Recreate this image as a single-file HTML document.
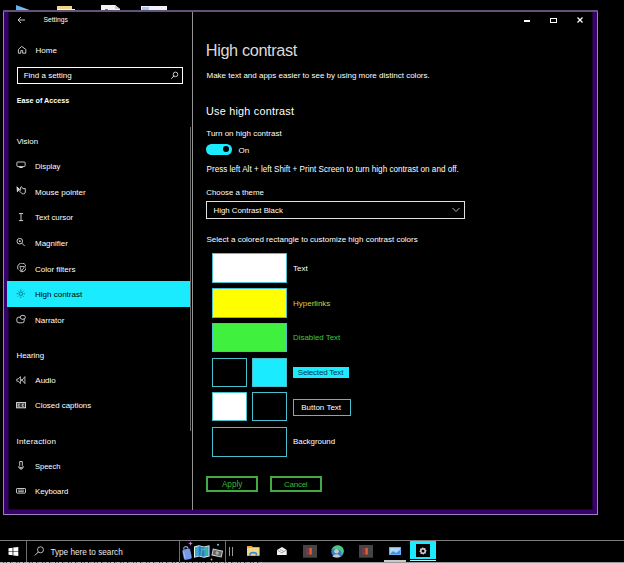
<!DOCTYPE html>
<html><head><meta charset="utf-8"><style>
html,body{margin:0;padding:0;width:624px;height:563px;overflow:hidden;background:#000;}
body{position:relative;font-family:"Liberation Sans", sans-serif;}
.t{position:absolute;white-space:nowrap;line-height:0;}
</style></head><body>
<svg style="position:absolute;left:0;top:0" width="200" height="12"><defs><linearGradient id="tg" x1="0" x2="1"><stop offset="0" stop-color="#5ab0ea"/><stop offset="0.6" stop-color="#7cc4f0"/><stop offset="1" stop-color="#e8f0f8"/></linearGradient></defs><polygon points="16,5 32,11 16,11" fill="url(#tg)"/><rect x="57" y="6" width="15" height="4" fill="#ecd488"/><rect x="57" y="9" width="18" height="2" fill="#f6f4ea"/><polygon points="101,5 115,5 120,9 120,11 101,11" fill="#f4f4f4"/><polygon points="115,5 120,9 115,9" fill="#c8c8c8"/><rect x="105" y="9" width="3" height="2" fill="#4a7ad0"/><rect x="141" y="6" width="26" height="5" fill="#eef2f8"/><rect x="142" y="7" width="7" height="3" fill="#a8c8ec"/></svg>
<div style="position:absolute;left:3px;top:10px;width:595px;height:505px;background:#9c82b8"></div>
<div style="position:absolute;left:3px;top:10px;width:595px;height:2px;background:#64527a"></div>
<div style="position:absolute;left:4px;top:12px;width:593px;height:502px;background:#37036b"></div>
<div style="position:absolute;left:8px;top:12px;width:585px;height:498px;background:#1c0236"></div>
<div style="position:absolute;left:9px;top:12px;width:583px;height:497px;background:#000"></div>
<div class="t" style="left:43.4px;top:20.46px;font-size:6.75px;color:#fff;font-weight:normal;">Settings</div>
<svg style="position:absolute;left:17px;top:16px" width="9" height="8" viewBox="0 0 9 8"><path d="M1 4H8M4 1L1 4L4 7" stroke="#ddd" stroke-width="0.9" fill="none"/></svg>
<div style="position:absolute;left:524px;top:20px;width:6px;height:2px;background:#fff"></div>
<div style="position:absolute;left:550px;top:17.5px;width:7px;height:5px;border:1.3px solid #fff;box-sizing:border-box"></div>
<svg style="position:absolute;left:577px;top:17px" width="6" height="6" viewBox="0 0 6 6"><path d="M0.5 0.5L5.5 5.5M5.5 0.5L0.5 5.5" stroke="#fff" stroke-width="1.2"/></svg>
<div style="position:absolute;left:192px;top:12px;width:1px;height:498px;background:#939393"></div>
<div style="position:absolute;left:190px;top:127px;width:1px;height:304px;background:#6c6c6c"></div>
<svg style="position:absolute;left:17px;top:45px" width="10" height="10" viewBox="0 0 10 10"><path d="M1.4 8.2V4.4L4.7 1.4L8.8 4.4V8.2H5.7V5.6H3.8V8.2Z" stroke="#ddd" stroke-width="0.9" fill="none" stroke-linejoin="round"/></svg>
<div class="t" style="left:35.5px;top:50.93px;font-size:8px;color:#fff;font-weight:normal;">Home</div>
<div style="position:absolute;left:17px;top:67px;width:166px;height:17px;border:1.5px solid #fff;box-sizing:border-box"></div>
<div class="t" style="left:23.7px;top:75.63px;font-size:8px;color:#fff;font-weight:normal;">Find a setting</div>
<svg style="position:absolute;left:171px;top:70px" width="9" height="10" viewBox="0 0 9 10"><circle cx="4.5" cy="4.4" r="2.3" stroke="#ddd" stroke-width="0.9" fill="none"/><path d="M2.9 6L0.6 8.4" stroke="#ddd" stroke-width="1" stroke-linecap="round"/></svg>
<div class="t" style="left:16.8px;top:101.01px;font-size:7.2px;color:#fff;font-weight:bold;">Ease of Access</div>
<div class="t" style="left:16.7px;top:141.86px;font-size:7.9px;color:#fff;font-weight:normal;">Vision</div>
<div style="position:absolute;left:7px;top:281px;width:183px;height:26px;background:#1aebff"></div>
<div class="t" style="left:35px;top:167.01px;font-size:7.75px;color:#fff;font-weight:normal;">Display</div>
<svg style="position:absolute;left:16px;top:161px" width="10" height="10" viewBox="0 0 10 10"><rect x="0.9" y="1" width="8.2" height="4.6" rx="0.8" stroke="#ddd" stroke-width="0.9" fill="none"/><path d="M3.3 6.4H6.7" stroke="#ddd" stroke-width="1.2"/></svg>
<div class="t" style="left:35px;top:192.73px;font-size:8px;color:#fff;font-weight:normal;">Mouse pointer</div>
<svg style="position:absolute;left:16px;top:185px" width="10" height="10" viewBox="0 0 10 10"><path d="M1 1.8L3.8 4.6L2.6 5.2L1.4 6.8Z" stroke="#ddd" stroke-width="0.9" fill="#ddd" stroke-linejoin="round"/><path d="M4.6 4.8V2.2Q5.2 1 6 2.2L6.8 3.6H9.3V7Q9.2 8.8 7.6 8.8H6.2L3.8 6.4Q3.6 5.4 4.6 5.6" stroke="#ddd" stroke-width="0.9" fill="none" stroke-linejoin="round"/></svg>
<div class="t" style="left:35px;top:218.20px;font-size:7.8px;color:#fff;font-weight:normal;">Text cursor</div>
<svg style="position:absolute;left:18px;top:213px" width="10" height="10" viewBox="0 0 10 10"><path d="M0.9 0.6H5.1M3 0.6V7.6M0.9 7.6H5.1" stroke="#ddd" stroke-width="0.9" fill="none"/></svg>
<div class="t" style="left:35px;top:243.93px;font-size:8px;color:#fff;font-weight:normal;">Magnifier</div>
<svg style="position:absolute;left:16px;top:238px" width="10" height="10" viewBox="0 0 10 10"><circle cx="3.8" cy="3.2" r="2.8" stroke="#ddd" stroke-width="0.9" fill="none"/><circle cx="3.8" cy="3.2" r="0.9" fill="#ddd"/><path d="M5.8 5.2L8.8 8.2" stroke="#ddd" stroke-width="0.9"/></svg>
<div class="t" style="left:35px;top:269.63px;font-size:8px;color:#fff;font-weight:normal;">Color filters</div>
<svg style="position:absolute;left:16px;top:263px" width="10" height="10" viewBox="0 0 10 10"><path d="M2.2 6.6A4.3 4.3 0 1 1 5.6 8.7C4.6 8.7 4 8 3.8 7" stroke="#ddd" stroke-width="0.9" fill="none"/><path d="M5.4 8.4L3.9 3.4L8.6 3.6Z" stroke="#ddd" stroke-width="0.8" fill="none"/></svg>
<div class="t" style="left:35px;top:295.43px;font-size:8px;color:#000;font-weight:normal;">High contrast</div>
<svg style="position:absolute;left:16px;top:289px" width="10" height="10" viewBox="0 0 10 10"><circle cx="4.8" cy="4.7" r="1.7" stroke="#005a66" stroke-width="0.8" fill="none"/><path d="M4.8 0.6V1.9M4.8 7.5V8.8M0.7 4.7H2M7.6 4.7H8.9M1.9 1.8L2.7 2.6M6.9 6.8L7.7 7.6M7.7 1.8L6.9 2.6M2.7 6.8L1.9 7.6" stroke="#005a66" stroke-width="0.8"/></svg>
<div class="t" style="left:35px;top:320.93px;font-size:8px;color:#fff;font-weight:normal;">Narrator</div>
<svg style="position:absolute;left:16px;top:314px" width="10" height="10" viewBox="0 0 10 10"><rect x="0.8" y="3.2" width="7.4" height="5.6" rx="2" stroke="#ddd" stroke-width="0.9" fill="none"/><ellipse cx="6.8" cy="3.3" rx="2.6" ry="2" stroke="#ddd" stroke-width="0.9" fill="#000"/></svg>
<div class="t" style="left:16.5px;top:355.96px;font-size:7.9px;color:#fff;font-weight:normal;">Hearing</div>
<div class="t" style="left:35.3px;top:380.93px;font-size:8px;color:#fff;font-weight:normal;">Audio</div>
<svg style="position:absolute;left:16px;top:376px" width="10" height="10" viewBox="0 0 10 10"><path d="M0.8 3H2.2L4.4 0.6V7.6L2.2 5.2H0.8Z" stroke="#ddd" stroke-width="0.8" fill="none"/><path d="M6 3L5.2 4.1L6 5.2M8.9 0.6V7.6L6.2 4.1Z" stroke="#ddd" stroke-width="0.8" fill="none"/></svg>
<div class="t" style="left:35px;top:406.46px;font-size:7.9px;color:#fff;font-weight:normal;">Closed captions</div>
<svg style="position:absolute;left:16px;top:402px" width="10" height="10" viewBox="0 0 10 10"><rect x="0.6" y="0.6" width="9" height="5.2" stroke="#ddd" stroke-width="1" fill="#333"/><path d="M4 2.2H2.2V4.2H4M8 2.2H6.2V4.2H8" stroke="#ddd" stroke-width="0.8" fill="none"/></svg>
<div class="t" style="left:16.5px;top:441.73px;font-size:8px;color:#fff;font-weight:normal;letter-spacing:0.2px">Interaction</div>
<div class="t" style="left:35px;top:466.70px;font-size:7.5px;color:#fff;font-weight:normal;">Speech</div>
<svg style="position:absolute;left:18px;top:461px" width="10" height="10" viewBox="0 0 10 10"><path d="M1.7 0.5H4.3V4.6L5.6 6.2L3 8.4L0.4 6.2L1.7 4.6Z" stroke="#ddd" stroke-width="0.9" fill="none"/><path d="M1.4 6.2H4.6V7.4H1.4Z" fill="#ddd"/></svg>
<div class="t" style="left:35px;top:492.30px;font-size:7.8px;color:#fff;font-weight:normal;">Keyboard</div>
<svg style="position:absolute;left:16px;top:488px" width="10" height="10" viewBox="0 0 10 10"><rect x="0.5" y="0.5" width="9" height="4.6" rx="0.6" stroke="#ddd" stroke-width="0.9" fill="none"/><path d="M2 2.1H8M2.2 3.6H7.8" stroke="#ddd" stroke-width="0.8"/></svg>
<div class="t" style="left:205.8px;top:49.55px;font-size:16.3px;color:#dadada;font-weight:normal;letter-spacing:-0.37px">High contrast</div>
<div class="t" style="left:206.5px;top:76.23px;font-size:8px;color:#fff;font-weight:normal;">Make text and apps easier to see by using more distinct colors.</div>
<div class="t" style="left:206px;top:111.36px;font-size:10.8px;color:#fff;font-weight:normal;letter-spacing:0.25px">Use high contrast</div>
<div class="t" style="left:206.3px;top:134.43px;font-size:8px;color:#fff;font-weight:normal;">Turn on high contrast</div>
<div style="position:absolute;left:206px;top:144.2px;width:25.8px;height:10.8px;background:#1aebff;border-radius:5.4px"></div>
<div style="position:absolute;left:223.3px;top:146.4px;width:5.8px;height:5.8px;background:#000;border-radius:50%"></div>
<div class="t" style="left:238.5px;top:150.53px;font-size:8px;color:#fff;font-weight:normal;">On</div>
<div class="t" style="left:206.5px;top:169.88px;font-size:8.15px;color:#fff;font-weight:normal;">Press left Alt + left Shift + Print Screen to turn high contrast on and off.</div>
<div class="t" style="left:206.3px;top:192.98px;font-size:7.85px;color:#fff;font-weight:normal;">Choose a theme</div>
<div style="position:absolute;left:206px;top:201px;width:259px;height:18px;border:1.5px solid #e0e0e0;box-sizing:border-box"></div>
<div class="t" style="left:213.5px;top:210.88px;font-size:7.85px;color:#fff;font-weight:normal;">High Contrast Black</div>
<svg style="position:absolute;left:452px;top:207px" width="8" height="6" viewBox="0 0 8 6"><path d="M0.5 1L4 4.5L7.5 1" stroke="#ddd" stroke-width="0.8" fill="none"/></svg>
<div class="t" style="left:206.5px;top:239.63px;font-size:8px;color:#fff;font-weight:normal;">Select a colored rectangle to customize high contrast colors</div>
<div style="position:absolute;left:212px;top:253px;width:75px;height:30px;background:#fff;border:1px solid #4cbfcc;box-sizing:border-box"></div>
<div class="t" style="left:293px;top:268.93px;font-size:8px;color:#fff;font-weight:normal;">Text</div>
<div style="position:absolute;left:212px;top:288px;width:75px;height:30px;background:#ffff00;border:1px solid #4cbfcc;box-sizing:border-box"></div>
<div class="t" style="left:293px;top:303.93px;font-size:8px;color:#d8d030;font-weight:normal;">Hyperlinks</div>
<div style="position:absolute;left:212px;top:323px;width:75px;height:29px;background:#3ff03f;border:1px solid #4cbfcc;box-sizing:border-box"></div>
<div class="t" style="left:293px;top:338.36px;font-size:7.9px;color:#3fc83f;font-weight:normal;">Disabled Text</div>
<div style="position:absolute;left:212px;top:358px;width:35px;height:29px;background:#000;border:1px solid #4cbfcc;box-sizing:border-box"></div>
<div style="position:absolute;left:252px;top:358px;width:35px;height:29px;background:#1aebff;border:1px solid #4cbfcc;box-sizing:border-box"></div>
<div style="position:absolute;left:293px;top:367px;width:56px;height:11px;background:#1aebff"></div>
<div class="t" style="left:297.8px;top:372.83px;font-size:8px;color:#003840;font-weight:normal;letter-spacing:-0.19px">Selected Text</div>
<div style="position:absolute;left:212px;top:392px;width:35px;height:29px;background:#fff;border:1px solid #4cbfcc;box-sizing:border-box"></div>
<div style="position:absolute;left:252px;top:392px;width:35px;height:29px;background:#000;border:1px solid #4cbfcc;box-sizing:border-box"></div>
<div style="position:absolute;left:293px;top:399px;width:58px;height:17px;border:1.3px solid #4cbfcc;box-sizing:border-box"></div>
<div class="t" style="left:301.2px;top:408.23px;font-size:8px;color:#fff;font-weight:normal;">Button Text</div>
<div style="position:absolute;left:212px;top:427px;width:75px;height:30px;background:#000;border:1px solid #4cbfcc;box-sizing:border-box"></div>
<div class="t" style="left:293px;top:442.36px;font-size:7.9px;color:#fff;font-weight:normal;">Background</div>
<div style="position:absolute;left:206px;top:476px;width:52px;height:16px;border:2px solid #44a844;box-sizing:border-box"></div>
<div style="position:absolute;left:270px;top:476px;width:52px;height:16px;border:2px solid #44a844;box-sizing:border-box"></div>
<div class="t" style="left:221.9px;top:484.66px;font-size:8.2px;color:#38b838;font-weight:normal;">Apply</div>
<div class="t" style="left:284px;top:484.73px;font-size:8px;color:#38b838;font-weight:normal;letter-spacing:-0.26px">Cancel</div>
<div style="position:absolute;left:0px;top:540px;width:624px;height:1px;background:#7c7c7c"></div>
<div style="position:absolute;left:26px;top:541px;width:1px;height:21px;background:#6e6e6e"></div>
<div style="position:absolute;left:179px;top:541px;width:1px;height:21px;background:#6e6e6e"></div>
<div style="position:absolute;left:225px;top:541px;width:1px;height:21px;background:#6e6e6e"></div>
<svg style="position:absolute;left:8px;top:547px" width="11" height="9" viewBox="0 0 11 9"><path d="M0.5 1.3L4.6 0.7V4.2H0.5Z M5.3 0.6L10.3 0V4.2H5.3Z M0.5 4.8H4.6V8.3L0.5 7.7Z M5.3 4.8H10.3V9L5.3 8.4Z" fill="#fff"/></svg>
<svg style="position:absolute;left:34px;top:546px" width="11" height="10" viewBox="0 0 11 10"><circle cx="6.5" cy="3.8" r="3" stroke="#ccc" stroke-width="0.9" fill="none"/><path d="M4.3 6L0.8 9.5" stroke="#ccc" stroke-width="1"/></svg>
<div class="t" style="left:50.4px;top:552.56px;font-size:8.2px;color:#e8e8e8;font-weight:normal;">Type here to search</div>
<svg style="position:absolute;left:180px;top:541px" width="45" height="22" viewBox="0 0 45 22"><g transform="rotate(-12 7 13)"><path d="M5 8V6.5Q7 4.5 9 6.5V8" stroke="#8aa8f0" stroke-width="1.1" fill="none"/><path d="M3 9.5Q3 8 5 8H9Q11 8 11 9.5V17Q11 18.5 9 18.5H5Q3 18.5 3 17Z" fill="#7898e8"/><path d="M4.2 10V16.5" stroke="#a8c0f8" stroke-width="0.9"/></g><polygon points="14,5.5 19,4.3 24,5.5 29.5,4.3 29.5,15.5 24,16.7 19,15.5 14,16.7" fill="#e8f4fa"/><polygon points="15,6.2 19,5.2 24,6.3 28.6,5.2 28.6,14.8 24,15.8 19,14.8 15,15.8" fill="#3a9ad8"/><polygon points="19,5.2 24,6.3 24,15.8 19,14.8" fill="#2a7cc0"/><path d="M17 6V15M22 6.5L21 15M26.5 6V14" stroke="#40b8a0" stroke-width="1.2" fill="none"/><path d="M22 9L26 7.5" stroke="#40d070" stroke-width="1.3"/><g transform="rotate(12 37 12)"><rect x="32" y="8.5" width="10.5" height="7" fill="#d0d0d0"/><rect x="33" y="9.5" width="8.5" height="5" fill="#666"/><circle cx="37.2" cy="12" r="1.7" fill="#aaa"/></g><path d="M10.5 0.4L11.3 2.1L13 2.6L11.3 3.1L10.5 4.8L9.7 3.1L8 2.6L9.7 2.1Z" fill="#d080e0"/><circle cx="38" cy="3.8" r="1" fill="#70d0f0"/><circle cx="31.5" cy="18.5" r="0.9" fill="#e0b030"/></svg>
<div style="position:absolute;left:229px;top:547px;width:1px;height:9px;background:#9a9a9a"></div>
<div style="position:absolute;left:232px;top:547px;width:1px;height:9px;background:#9a9a9a"></div>
<svg style="position:absolute;left:246.5px;top:545.8px" width="13" height="10" viewBox="0 0 13 10"><path d="M0 0H5L6 1.2H0Z" fill="#e0a838"/><rect x="0" y="1.2" width="12.6" height="8.6" fill="#f2d68a"/><path d="M3.2 9.8V7.4Q6.3 5.8 9.4 7.4V9.8" stroke="#3a8ad0" stroke-width="1.6" fill="none"/></svg>
<svg style="position:absolute;left:276.5px;top:546.8px" width="10" height="8" viewBox="0 0 10 8"><path d="M0 3L5 0L9.7 3V8H0Z" fill="#f4f4f4"/><path d="M0.5 3.2L5 6L9.2 3.2M3 2.5L7 4.5" stroke="#777" stroke-width="0.6" fill="none"/></svg>
<svg style="position:absolute;left:303px;top:545px" width="14" height="13" viewBox="0 0 14 13"><rect width="14" height="12.7" fill="#454545"/><path d="M6.5 3A3.3 3.3 0 0 0 6.5 9.6Z" fill="#a83050"/><path d="M6.5 3H8.8V9.6H6.5Z" fill="#e0602a"/><path d="M5.6 4.8A1.5 1.5 0 0 0 5.6 7.8" fill="#454545"/></svg>
<svg style="position:absolute;left:359px;top:545px" width="14" height="13" viewBox="0 0 14 13"><rect width="14" height="12.7" fill="#454545"/><path d="M6.5 3A3.3 3.3 0 0 0 6.5 9.6Z" fill="#a83050"/><path d="M6.5 3H8.8V9.6H6.5Z" fill="#e0602a"/><path d="M5.6 4.8A1.5 1.5 0 0 0 5.6 7.8" fill="#454545"/></svg>
<svg style="position:absolute;left:330px;top:545px" width="15" height="13" viewBox="0 0 15 13"><circle cx="7.5" cy="6.5" r="6.2" fill="#3c7fc0"/><path d="M1.5 5Q4 0 9 0.6Q13.5 1.5 13.8 6Q13.5 9 11.5 10Q12 6 9 4.5Q5 3 1.5 5Z" fill="#4cc880"/><circle cx="6.5" cy="6.2" r="2.3" fill="#c8c8c8"/><path d="M2.3 11.5Q6.5 7 10.7 11.5Q6.5 13.5 2.3 11.5Z" fill="#c8c8c8"/></svg>
<svg style="position:absolute;left:389px;top:547px" width="12" height="8" viewBox="0 0 12 8"><rect width="12" height="8" fill="#6ab0f0"/><rect x="1" y="1" width="10" height="6" fill="#a8d4ff"/><circle cx="3" cy="2.5" r="1" fill="#f0e060"/><path d="M1 7L4 4L7 6L11 3V7Z" fill="#4a90e0"/></svg>
<div style="position:absolute;left:384px;top:560px;width:22px;height:2px;background:#c8c8c8"></div>
<div style="position:absolute;left:410px;top:541px;width:26px;height:18px;background:#1aebff"></div>
<div style="position:absolute;left:416px;top:544px;width:14px;height:13px;background:#000"></div>
<svg style="position:absolute;left:419px;top:547.2px" width="8" height="8" viewBox="0 0 8 8"><polygon points="7.78,3.63 6.68,4.81 6.94,6.41 5.32,6.47 4.37,7.78 3.19,6.68 1.59,6.94 1.53,5.32 0.22,4.37 1.32,3.19 1.06,1.59 2.68,1.53 3.63,0.22 4.81,1.32 6.41,1.06 6.47,2.68" fill="#d8d8d8"/><circle cx="4" cy="4" r="1.5" fill="#000"/></svg>
<div style="position:absolute;left:410px;top:560px;width:26px;height:1px;background:#bfeff5"></div>
<div style="position:absolute;left:0px;top:562px;width:262px;height:1px;background:repeating-linear-gradient(90deg,#b4b4b4 0 3px,#4a4a4a 3px 4px,#a8a8a8 4px 6px,#5a5a5a 6px 7px,#bcbcbc 7px 10px,#3a3a3a 10px 11px,#9a9a9a 11px 13px)"></div>
<div style="position:absolute;left:262px;top:562px;width:362px;height:1px;background:#9a9a9a"></div>
</body></html>
